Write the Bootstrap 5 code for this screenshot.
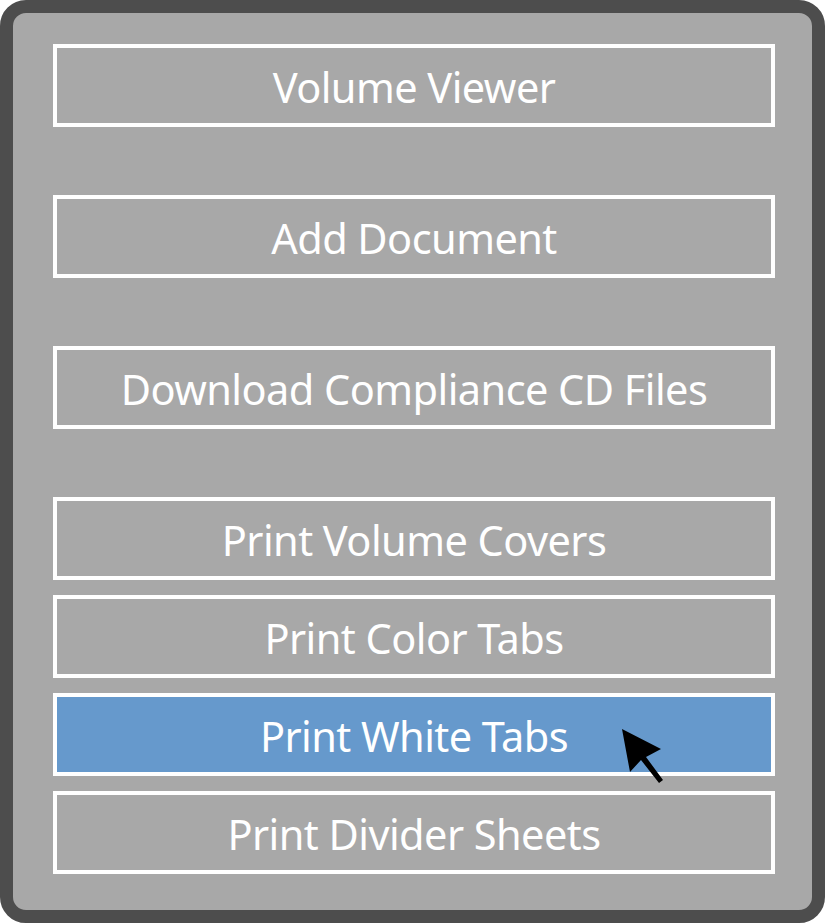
<!DOCTYPE html>
<html lang="en">
<head>
<meta charset="UTF-8">
<title>Volume Menu</title>
<link href="https://cdn.jsdelivr.net/npm/bootstrap@5.3.0/dist/css/bootstrap.min.css" rel="stylesheet">
<style>
html, body { height: 923px; background: #fff; overflow: hidden; }
.menu-panel { width: 825px; height: 923px; background: #a8a8a8; border: 13px solid #4d4d4d; border-radius: 26px; padding: 31px 37px 0 40px; }
.menu-btn { height: 83px; border: 4px solid #fff; color: #fff; font-family: "Noto Sans", sans-serif; font-size: 41.5px; letter-spacing: -0.55px; line-height: 1; padding-top: 5px; cursor: pointer; }
.menu-btn.active-item { background: #6699cc; }
.gap-big { margin-bottom: 68px; }
.gap-small { margin-bottom: 15px; }
.menu-cursor { position: absolute; left: 621px; top: 727px; width: 44px; height: 58px; }
</style>
</head>
<body class="position-relative">
<div class="menu-panel">
  <div class="menu-btn gap-big d-flex align-items-center justify-content-center">Volume Viewer</div>
  <div class="menu-btn gap-big d-flex align-items-center justify-content-center">Add Document</div>
  <div class="menu-btn gap-big d-flex align-items-center justify-content-center">Download Compliance CD Files</div>
  <div class="menu-btn gap-small d-flex align-items-center justify-content-center">Print Volume Covers</div>
  <div class="menu-btn gap-small d-flex align-items-center justify-content-center">Print Color Tabs</div>
  <div class="menu-btn active-item gap-small d-flex align-items-center justify-content-center">Print White Tabs</div>
  <div class="menu-btn d-flex align-items-center justify-content-center">Print Divider Sheets</div>
</div>
<svg class="menu-cursor" viewBox="0 0 44 58"><path d="M1 2 L40 22 L25 30 L42 53 L38 56 L20 33 L9 45 Z" fill="#000"/></svg>
</body>
</html>
